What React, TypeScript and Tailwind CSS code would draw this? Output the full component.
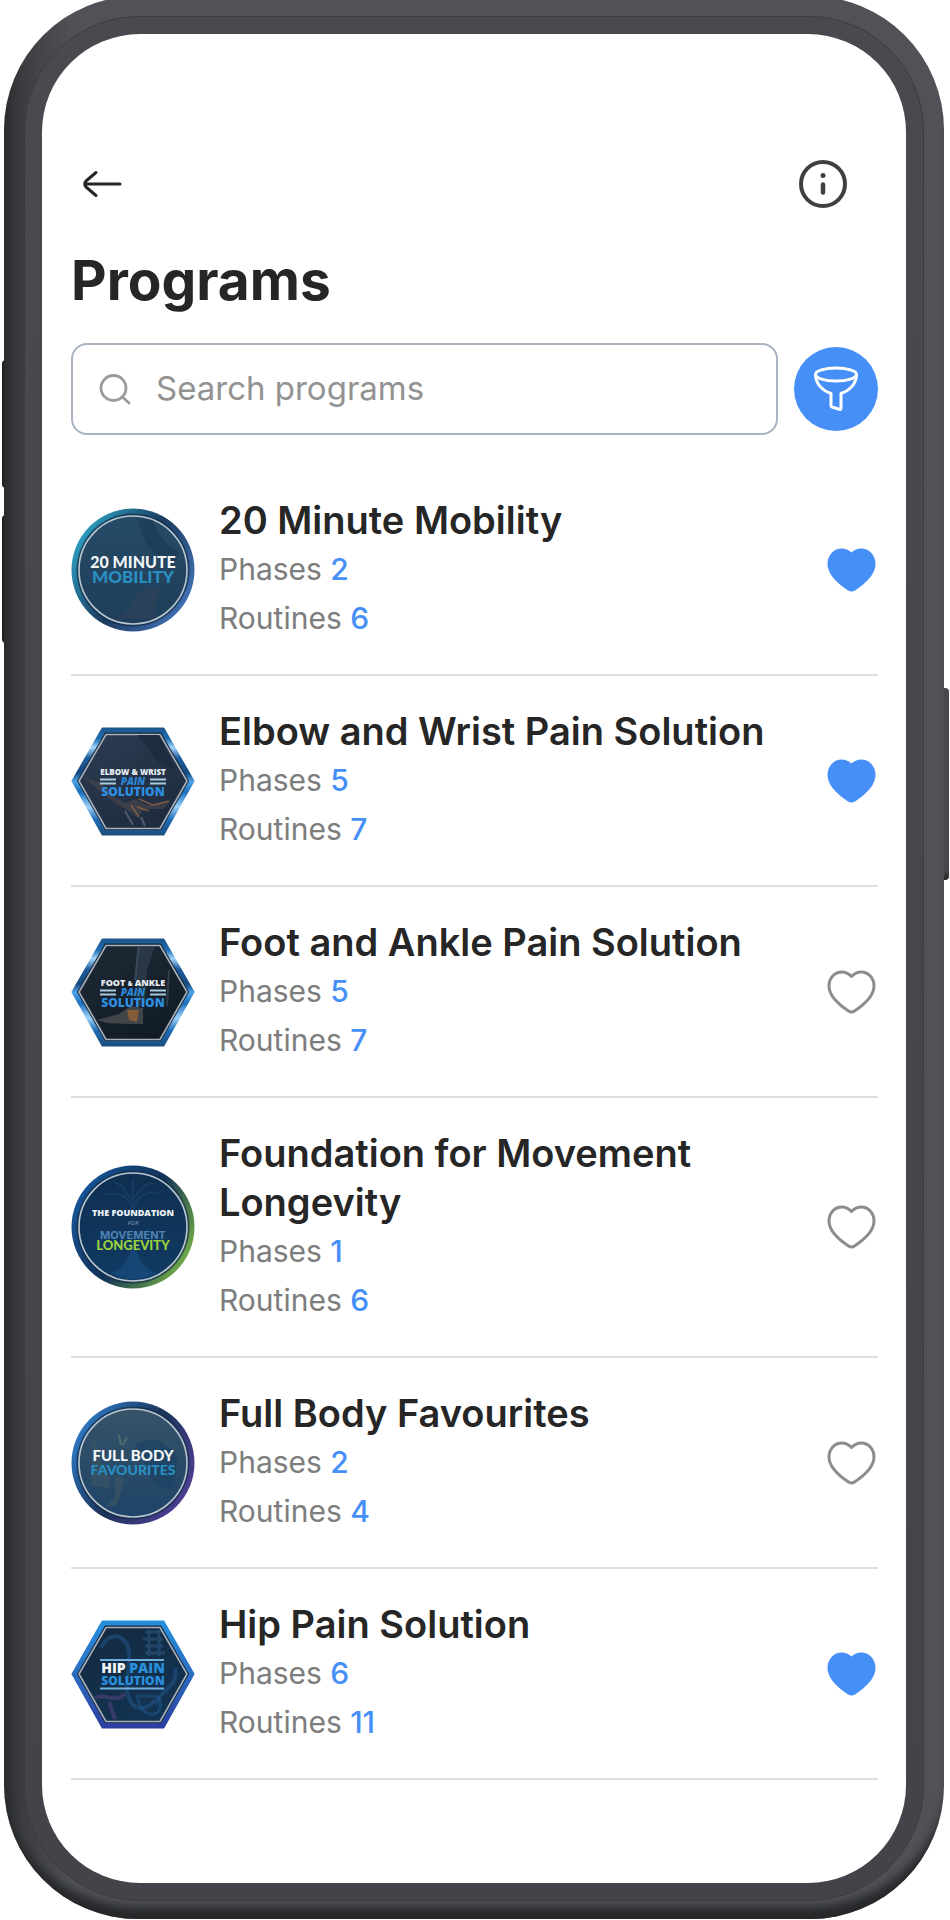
import { ReactNode, useState } from "react";

interface IProgram {
  id: string;
  title: string;
  phases: number;
  routines: number;
  favourite: boolean;
  badge: ReactNode;
}

interface RoundBadgeProps {
  id: string;
  ring: string[];
  face: string[];
  children: ReactNode;
}

function RoundBadge({ id, ring, face, children }: RoundBadgeProps) {
  return (
    <svg viewBox="0 0 124 124" className="size-31 shrink-0" aria-hidden="true">
      <defs>
        <linearGradient id={`${id}-ring`} x1="0" y1="0.2" x2="1" y2="0.8">
          <stop offset="0" stopColor={ring[0]} />
          <stop offset="0.5" stopColor={ring[1]} />
          <stop offset="1" stopColor={ring[2]} />
        </linearGradient>
        <linearGradient id={`${id}-face`} x1="0" y1="0" x2="0" y2="1">
          <stop offset="0" stopColor={face[0]} />
          <stop offset="1" stopColor={face[1]} />
        </linearGradient>
      </defs>
      <circle cx="62" cy="62" r="61.5" fill={`url(#${id}-ring)`} />
      <circle cx="62" cy="62" r="56.5" fill="#132c45" opacity="0.7" />
      <circle
        cx="62"
        cy="62"
        r="54"
        fill={`url(#${id}-face)`}
        stroke="#b9c6d0"
        strokeWidth="1.6"
      />
      {children}
    </svg>
  );
}

interface HexBadgeProps {
  id: string;
  edge: { offset: string; color: string }[];
  face: string[];
  children: ReactNode;
}

function HexBadge({ id, edge, face, children }: HexBadgeProps) {
  return (
    <svg viewBox="0 0 124 124" className="size-31 shrink-0" aria-hidden="true">
      <defs>
        <linearGradient id={`${id}-edge`} x1="0" y1="0" x2="0" y2="1">
          {edge.map((stop) => (
            <stop
              key={stop.offset}
              offset={stop.offset}
              stopColor={stop.color}
            />
          ))}
        </linearGradient>
        <linearGradient id={`${id}-face`} x1="0" y1="0" x2="0.6" y2="1">
          <stop offset="0" stopColor={face[0]} />
          <stop offset="1" stopColor={face[1]} />
        </linearGradient>
      </defs>
      <path
        d="M31.5 9.5H92.5L122.5 62L92.5 115.5H31.5L1.5 62Z"
        fill={`url(#${id}-edge)`}
        stroke={`url(#${id}-edge)`}
        strokeWidth="2"
        strokeLinejoin="round"
      />
      <path d="M34 13.5H90L118 62L90 111H34L6 62Z" fill="#15263a" />
      <path
        d="M35 15.5H89L116 62L89 109.5H35L8 62Z"
        fill={`url(#${id}-face)`}
        stroke="#a9b1ba"
        strokeWidth="1.6"
      />
      {children}
    </svg>
  );
}

const steelEdge = [
  { offset: "0", color: "#1d568c" },
  { offset: "0.1", color: "#1f6fb5" },
  { offset: "0.18", color: "#a5d6fb" },
  { offset: "0.28", color: "#1c5c9c" },
  { offset: "0.42", color: "#164a7d" },
  { offset: "0.5", color: "#4da3e8" },
  { offset: "0.6", color: "#1b6fbc" },
  { offset: "0.74", color: "#9cd2fb" },
  { offset: "0.86", color: "#1d6cb4" },
  { offset: "1", color: "#1c4f7f" },
];

const hipEdge = [
  { offset: "0", color: "#2590dc" },
  { offset: "0.5", color: "#2a6cc0" },
  { offset: "1", color: "#2b3f9f" },
];

const badgeText = "font-['Open_Sans',sans-serif] font-extrabold";
const roundText = "font-['Lato',sans-serif] font-black";

const mobilityBadge = (
  <RoundBadge
    id="mobility"
    ring={["#2fa9cb", "#1b3a5f", "#4577bd"]}
    face={["#264b66", "#1f3e5a"]}
  >
    <path
      d="M66 10C72 38 84 50 104 54L108 44C92 34 84 24 82 12Z"
      fill="#1b3a56"
      opacity="0.6"
    />
    <path
      d="M44 112C58 104 62 92 74 80H92C82 88 86 100 84 110M66 112C76 102 76 92 80 84"
      fill="#33415a"
      opacity="0.55"
    />
    <text
      x="62"
      y="60"
      textAnchor="middle"
      fontSize="16"
      fill="#f2f5f7"
      className={roundText}
    >
      20 MINUTE
    </text>
    <text
      x="62"
      y="75"
      textAnchor="middle"
      fontSize="17"
      fill="#2a8fc2"
      className={roundText}
    >
      MOBILITY
    </text>
  </RoundBadge>
);

const elbowBadge = (
  <HexBadge id="elbow" edge={steelEdge} face={["#2c3c52", "#1f2c40"]}>
    <path
      d="M66 16L88 16L104 50C90 48 82 40 78 30Z"
      fill="#1b2a3f"
      opacity="0.8"
    />
    <path
      d="M12 58L30 64L44 78L54 84L64 80L76 86L100 82L92 90L74 90L66 98L58 92L44 84Z"
      fill="#5b4f50"
      opacity="0.45"
    />
    <path
      d="M68 80L82 86L98 82M66 88L78 92M60 86L68 98"
      stroke="#9b6b45"
      strokeWidth="1.5"
      fill="none"
      opacity="0.7"
    />
    <path
      d="M54 92L62 106M70 98L74 107"
      stroke="#7d8896"
      strokeWidth="2"
      opacity="0.5"
    />
    <text
      x="62"
      y="56"
      textAnchor="middle"
      fontSize="8"
      fill="#e8edf2"
      className={badgeText}
    >
      ELBOW &amp; WRIST
    </text>
    <path
      d="M29 60.5H45M29 64.5H45M79 60.5H95M79 64.5H95"
      stroke="#a9cbe0"
      strokeWidth="2.2"
    />
    <text
      x="62"
      y="66"
      textAnchor="middle"
      fontSize="10"
      fill="#2b86d6"
      className={`${badgeText} italic`}
    >
      PAIN
    </text>
    <text
      x="62"
      y="77"
      textAnchor="middle"
      fontSize="12"
      fill="#2e8fe0"
      className={badgeText}
    >
      SOLUTION
    </text>
  </HexBadge>
);

const footBadge = (
  <HexBadge id="foot" edge={steelEdge} face={["#1d2a36", "#121c27"]}>
    <path
      d="M66 16H84L76 40L74 76H66L64 46Z"
      fill="#3a4a58"
      opacity="0.5"
    />
    <path
      d="M68 16L64 50M98 40L96 76"
      stroke="#4b5c6c"
      strokeWidth="2"
      opacity="0.5"
    />
    <path
      d="M26 90L48 84L60 76L72 78L72 94L56 94L36 93Z"
      fill="#6d6a66"
      opacity="0.5"
    />
    <path d="M56 80L68 80L66 92L58 90Z" fill="#b06a2c" opacity="0.6" />
    <text
      x="62"
      y="56"
      textAnchor="middle"
      fontSize="9"
      fill="#e8edf2"
      className={badgeText}
    >
      FOOT <tspan fontSize="6">&amp;</tspan> ANKLE
    </text>
    <path
      d="M29 60.5H45M29 64.5H45M79 60.5H95M79 64.5H95"
      stroke="#a9cbe0"
      strokeWidth="2.2"
    />
    <text
      x="62"
      y="66"
      textAnchor="middle"
      fontSize="10"
      fill="#2b86d6"
      className={`${badgeText} italic`}
    >
      PAIN
    </text>
    <text
      x="62"
      y="77"
      textAnchor="middle"
      fontSize="12"
      fill="#2e8fe0"
      className={badgeText}
    >
      SOLUTION
    </text>
  </HexBadge>
);

const foundationBadge = (
  <RoundBadge
    id="foundation"
    ring={["#16589f", "#123157", "#7dbb45"]}
    face={["#0f2f50", "#113a63"]}
  >
    <path
      d="M62 78C60 92 52 104 40 108C54 116 72 116 86 108C72 104 66 92 64 78Z"
      fill="#184a7c"
      opacity="0.8"
    />
    <path
      d="M62 46C60 30 44 26 34 30M62 46C64 30 80 24 90 30M62 46V14M60 34C54 24 48 18 44 18M64 32C70 22 76 18 82 18"
      stroke="#1a456d"
      strokeWidth="2"
      fill="none"
      opacity="0.6"
    />
    <text
      x="62"
      y="51"
      textAnchor="middle"
      fontSize="9"
      fill="#eef3f7"
      className={badgeText}
    >
      THE FOUNDATION
    </text>
    <text
      x="62"
      y="60"
      textAnchor="middle"
      fontSize="6"
      fill="#7f97ae"
      className="font-['Open_Sans',sans-serif] italic"
    >
      FOR
    </text>
    <text
      x="62"
      y="74"
      textAnchor="middle"
      fontSize="11"
      fill="#4d82b5"
      className="font-['Inter',sans-serif] font-bold"
    >
      MOVEMENT
    </text>
    <text
      x="62"
      y="85"
      textAnchor="middle"
      fontSize="13"
      fill="#9bd13c"
      className={roundText}
    >
      LONGEVITY
    </text>
  </RoundBadge>
);

const fullBodyBadge = (
  <RoundBadge
    id="fullbody"
    ring={["#2f80cf", "#1b3358", "#55409b"]}
    face={["#365368", "#1f4468"]}
  >
    <path
      d="M64 44C76 36 92 38 96 46L106 52L104 84C92 92 80 84 78 70Z"
      fill="#1d4163"
      opacity="0.7"
    />
    <path
      d="M22 34C30 54 28 66 40 78L38 88L20 84M44 74V96L34 106L46 104L54 78"
      fill="#3b5463"
      opacity="0.7"
    />
    <path d="M50 44L48 34M52 44L56 36" stroke="#4f6d6a" strokeWidth="2" />
    <text
      x="62"
      y="60"
      textAnchor="middle"
      fontSize="15"
      fill="#f2f5f7"
      className={roundText}
    >
      FULL BODY
    </text>
    <text
      x="62"
      y="74"
      textAnchor="middle"
      fontSize="14"
      fill="#2a8fc2"
      className={roundText}
    >
      FAVOURITES
    </text>
  </RoundBadge>
);

const hipBadge = (
  <HexBadge id="hip" edge={hipEdge} face={["#15293f", "#123352"]}>
    <path
      d="M30 36C38 18 56 22 58 40C60 58 52 70 58 86C64 102 78 96 84 88M84 92C92 76 108 74 104 56"
      stroke="#235d95"
      strokeWidth="4"
      fill="none"
      opacity="0.45"
    />
    <path
      d="M74 20H90M72 27H92M74 34H92M74 41H94M78 18V44M88 18V44"
      stroke="#2f5f8a"
      strokeWidth="3"
      opacity="0.5"
    />
    <path
      d="M66 84H84C92 84 92 104 80 102C72 102 68 92 66 84Z"
      stroke="#235d95"
      strokeWidth="3"
      fill="none"
      opacity="0.45"
    />
    <path
      d="M24 86C32 80 44 92 54 82M38 90L44 107"
      stroke="#5b4684"
      strokeWidth="4"
      fill="none"
      opacity="0.5"
    />
    <path d="M29 48H93M29 76.5H93" stroke="#6fb0dd" strokeWidth="2.2" />
    <text
      x="62"
      y="61"
      textAnchor="middle"
      fontSize="14"
      fill="#f2f5f7"
      className={badgeText}
    >
      HIP <tspan fill="#2a8fdc">PAIN</tspan>
    </text>
    <text
      x="62"
      y="73"
      textAnchor="middle"
      fontSize="12"
      fill="#2a8fdc"
      className={badgeText}
    >
      SOLUTION
    </text>
  </HexBadge>
);

const initialPrograms: IProgram[] = [
  {
    id: "mobility",
    title: "20 Minute Mobility",
    phases: 2,
    routines: 6,
    favourite: true,
    badge: mobilityBadge,
  },
  {
    id: "elbow",
    title: "Elbow and Wrist Pain Solution",
    phases: 5,
    routines: 7,
    favourite: true,
    badge: elbowBadge,
  },
  {
    id: "foot",
    title: "Foot and Ankle Pain Solution",
    phases: 5,
    routines: 7,
    favourite: false,
    badge: footBadge,
  },
  {
    id: "foundation",
    title: "Foundation for Movement Longevity",
    phases: 1,
    routines: 6,
    favourite: false,
    badge: foundationBadge,
  },
  {
    id: "fullbody",
    title: "Full Body Favourites",
    phases: 2,
    routines: 4,
    favourite: false,
    badge: fullBodyBadge,
  },
  {
    id: "hip",
    title: "Hip Pain Solution",
    phases: 6,
    routines: 11,
    favourite: true,
    badge: hipBadge,
  },
];

interface ProgramRowProps {
  program: IProgram;
  onToggleFavourite: (id: string) => void;
}

function ProgramRow({ program, onToggleFavourite }: ProgramRowProps) {
  return (
    <li className="flex items-center border-b-2 border-[#dedede] py-[31px]">
      {program.badge}
      <div className="ml-6 flex-1">
        <h2 className="text-[38px] leading-[49px] font-semibold text-[#262626]">
          {program.title}
        </h2>
        <p className="text-[30px] leading-[49px] text-[#7d7d7d]">
          Phases{" "}
          <span className="font-medium text-[#468ff7]">{program.phases}</span>
        </p>
        <p className="text-[30px] leading-[49px] text-[#7d7d7d]">
          Routines{" "}
          <span className="font-medium text-[#468ff7]">{program.routines}</span>
        </p>
      </div>
      <button
        type="button"
        aria-label={`Favourite ${program.title}`}
        aria-pressed={program.favourite}
        onClick={() => onToggleFavourite(program.id)}
        className="shrink-0"
      >
        <svg
          viewBox="0 0 52 48"
          className={`h-12 w-[52px] ${
            program.favourite
              ? "fill-[#468ff7] stroke-[#468ff7]"
              : "fill-none stroke-[#8c8c8c]"
          }`}
          strokeWidth="3"
          strokeLinejoin="round"
        >
          <path d="M25.5 8.5C23 6 20 4 16 4C8.5 4 3 10 3 18C3 28 13.5 37 22.5 43C24.5 44.3 26.5 44.3 28.5 43C37.5 37 48 28 48 18C48 10 42.5 4 35 4C31 4 28 6 25.5 8.5Z" />
        </svg>
      </button>
    </li>
  );
}

export default function App() {
  const [programs, setPrograms] = useState<IProgram[]>(initialPrograms);
  const [search, setSearch] = useState("");

  const toggleFavourite = (id: string) => {
    setPrograms((current) =>
      current.map((program) =>
        program.id === id
          ? { ...program, favourite: !program.favourite }
          : program,
      ),
    );
  };

  const visiblePrograms = programs.filter((program) =>
    program.title.toLowerCase().includes(search.toLowerCase()),
  );

  return (
    <div className="relative min-h-screen overflow-hidden bg-white pr-1.5 pl-1 font-['Inter',sans-serif]">
      {/* side buttons */}
      <span className="absolute top-[360px] left-0.5 h-32 w-2 rounded-l-sm bg-[#1f2122]" />
      <span className="absolute top-[515px] left-0.5 h-32 w-2 rounded-l-sm bg-[#1f2122]" />
      <span className="absolute top-[688px] right-px h-48 w-2 rounded-r-sm bg-linear-to-b from-[#47484c] from-95% to-[#222324]" />

      {/* phone body */}
      <div className="relative -mt-1 rounded-[134px] bg-[linear-gradient(90deg,#2a2c2e,#3c3e41_20px,#505257_70px)] px-5 pt-5 pb-[18px] shadow-[inset_0_-18px_10px_-6px_#26282a]">
        <div className="rounded-[115px] border border-[#3b3c40] bg-linear-to-b from-[#494a4f] to-[#434449] p-[17px]">
          <div className="rounded-[98px] bg-white pt-[124px] pr-7 pb-[103px] pl-[29px]">
            <header className="flex items-center justify-between pr-7 pl-2.5">
              <button type="button" aria-label="Back">
                <svg
                  viewBox="0 0 44 32"
                  className="h-8 w-11 fill-none stroke-[#262626]"
                  strokeWidth="3"
                  strokeLinecap="round"
                  strokeLinejoin="round"
                >
                  <path d="M39 16H5M15 4.5L5 13Q2.5 16 5 19L15 27.5" />
                </svg>
              </button>
              <button type="button" aria-label="Information">
                <svg viewBox="0 0 52 52" className="size-13">
                  <circle
                    cx="25"
                    cy="26"
                    r="22"
                    fill="none"
                    stroke="#404040"
                    strokeWidth="4"
                  />
                  <circle cx="25" cy="17.5" r="2.5" fill="#404040" />
                  <path
                    d="M25 26.5V34.5"
                    stroke="#404040"
                    strokeWidth="4.5"
                    strokeLinecap="round"
                  />
                </svg>
              </button>
            </header>

            <h1 className="mt-[34px] text-[55px] leading-[72px] font-bold text-[#262626]">
              Programs
            </h1>

            <div className="mt-[27px] flex items-center gap-4">
              <label className="flex h-[92px] min-w-0 flex-1 items-center gap-6 rounded-2xl border-2 border-[#a9b3c2] px-[25px]">
                <svg
                  viewBox="0 0 34 34"
                  className="size-[34px] shrink-0 fill-none stroke-[#9b9b9b]"
                  strokeWidth="2.8"
                  strokeLinecap="round"
                  aria-hidden="true"
                >
                  <circle cx="15.5" cy="16" r="12.5" />
                  <path d="M25 25.5L31 31" />
                </svg>
                <input
                  type="text"
                  aria-label="Search programs"
                  placeholder="Search programs"
                  value={search}
                  onChange={(event) => setSearch(event.target.value)}
                  className="min-w-0 flex-1 text-[33px] text-[#262626] outline-none placeholder:text-[#929292]"
                />
              </label>
              <button
                type="button"
                aria-label="Filter"
                className="size-21 shrink-0 rounded-full bg-[#468ff7]"
              >
                <svg
                  viewBox="0 0 84 84"
                  className="size-21 fill-none stroke-white"
                  strokeWidth="3"
                  strokeLinejoin="round"
                >
                  <ellipse cx="42" cy="27.5" rx="20.5" ry="6.5" />
                  <path d="M21.5 27.5C21.5 37 29 44 37 46.5V58.5Q37 59.5 38 60L46 62.5Q47 62.5 47 61V46.5C55 44 62.5 37 62.5 27.5" />
                </svg>
              </button>
            </div>

            <ul className="mt-[30px]">
              {visiblePrograms.map((program) => (
                <ProgramRow
                  key={program.id}
                  program={program}
                  onToggleFavourite={toggleFavourite}
                />
              ))}
            </ul>
          </div>
        </div>
      </div>
    </div>
  );
}
